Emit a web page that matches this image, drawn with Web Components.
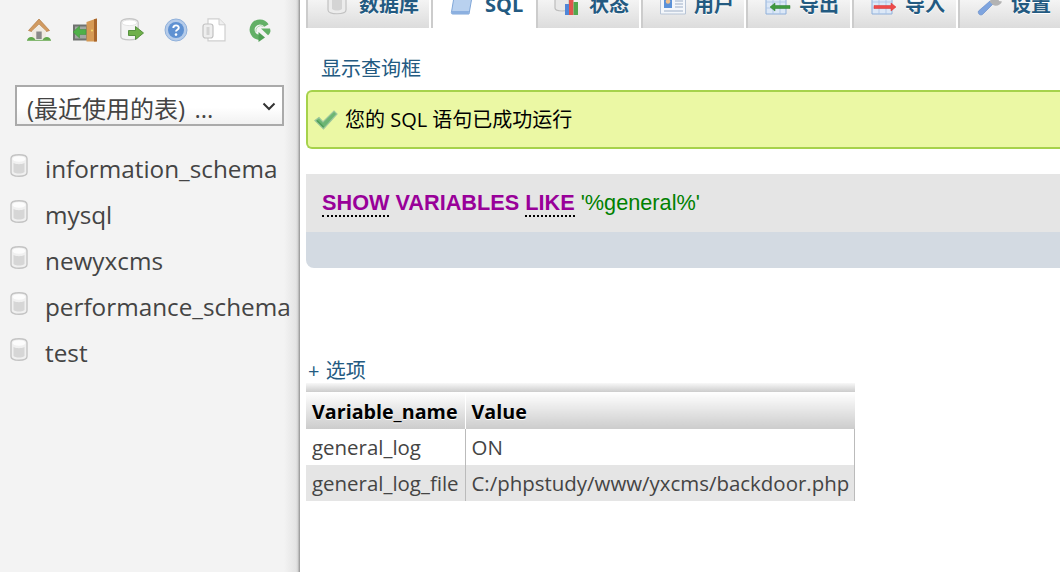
<!DOCTYPE html>
<html lang="zh"><head><meta charset="utf-8"><title>phpMyAdmin</title>
<style>
html,body{margin:0;padding:0;height:100%;background:#fff;overflow:hidden}
body{font-family:"Open Sans","Noto Sans CJK SC",sans-serif}
</style></head><body>
<pma-app>
  <pma-sidebar slot="side">
    <pma-toolbar>
      <pma-icon name="home"></pma-icon><pma-icon name="exit"></pma-icon><pma-icon name="dbgo"></pma-icon><pma-icon name="help"></pma-icon><pma-icon name="docs"></pma-icon><pma-icon name="reload"></pma-icon>
    </pma-toolbar>
    <pma-select>(最近使用的表) ...</pma-select>
    <pma-db>information_schema</pma-db>
    <pma-db>mysql</pma-db>
    <pma-db>newyxcms</pma-db>
    <pma-db>performance_schema</pma-db>
    <pma-db>test</pma-db>
  </pma-sidebar>
  <pma-main slot="main">
    <pma-tabs>
      <pma-tab icon="tdb" style="--w:123px;--pl:19px;--g:12px">数据库</pma-tab>
      <pma-tab icon="tsql" active style="--w:103px;--pl:17px;--g:11px">SQL</pma-tab>
      <pma-tab icon="tstat" style="--w:103px;--pl:16px;--g:11px">状态</pma-tab>
      <pma-tab icon="tuser" style="--w:103px;--pl:17px;--g:8px">用户</pma-tab>
      <pma-tab icon="texp" style="--w:104px;--pl:17px;--g:8px">导出</pma-tab>
      <pma-tab icon="timp" style="--w:104px;--pl:17px;--g:8px">导入</pma-tab>
      <pma-tab icon="tset" style="--w:102px;--pl:17px;--g:8px">设置</pma-tab>
    </pma-tabs>
    <pma-link style="--ml:15px;--mt:29px">显示查询框</pma-link>
    <pma-success>您的 SQL 语句已成功运行</pma-success>
    <pma-sql></pma-sql>
    <pma-link style="--ml:2px;--mt:91px">+ 选项</pma-link>
    <pma-result></pma-result>
  </pma-main>
</pma-app>
<script>
const ICONS={
home:`<svg viewBox="0 0 24 24" width="24" height="24"><path d="M1.500 12.500 12 1l10.500 11.500-3 1L12 6 4.500 13.500z" fill="#d19a60" stroke="#b07a42" stroke-width=".7"/><path d="M5 13 12 6.500 19 13v8H5z" fill="#f0ebe2"/><path d="M9.300 13.500h5.400V21H9.300z" fill="#8a8a8a"/><path d="M0 23c.3-3.500 4-5 7-3 .8.600 1.300 1.800 1.500 3zM24 23c-.3-3.500-4-5-7-3-.8.600-1.300 1.800-1.500 3z" fill="#5fa84a"/><path d="M0 21.800h24V23H0z" fill="#86b974"/></svg>`,
exit:`<svg viewBox="0 0 24 24" width="24" height="24"><path d="M0 6.500h15V22.500H0z" fill="#6f726f"/><path d="M2 8.500h11v12H2z" fill="#a3a6a3"/><path d="M13.500 4 23.500.5v23h-10z" fill="#d69a55"/><path d="M21 1.300V23.500h3V.5z" fill="#a9662c"/><circle cx="19" cy="12.500" r="1" fill="#f6dc6b"/><path d="M0 14l6.500-6v3.500H13v5H6.500V20z" fill="#4fb048" stroke="#3c8c38" stroke-width=".5"/></svg>`,
dbgo:`<svg viewBox="0 0 24 24" width="24" height="24"><path d="M.8 4.500c0-5 17.400-5 17.400 0v14c0 4.500-17.400 4.500-17.400 0z" fill="#f4f4f4" stroke="#c6c6c6" stroke-width="1.300"/><ellipse cx="9.500" cy="4.800" rx="7.500" ry="2.800" fill="#fff" stroke="#d6d6d6" stroke-width=".6"/><path d="M8.500 12.500h7V8.500l8 6.500-8 6.500v-4h-7z" fill="#6fb04a" stroke="#4d8a36" stroke-width=".9"/></svg>`,
help:`<svg viewBox="0 0 24 24" width="24" height="24"><circle cx="12" cy="12" r="11" fill="#b5cbe9" stroke="#8fb0da"/><circle cx="12" cy="12" r="8" fill="#5f91d2"/><path d="M9.300 10c0-3.500 5.500-3.500 5.500-.2 0 2-2.800 2-2.800 3.800" fill="none" stroke="#fff" stroke-width="1.900"/><circle cx="12" cy="16.600" r="1.300" fill="#fff"/></svg>`,
docs:`<svg viewBox="0 0 24 24" width="24" height="24"><path d="M6 .8h11l6 6v16H6z" fill="#fff" stroke="#cfcfcf" stroke-width="1.200"/><path d="M17 .8v6h6" fill="#efefef" stroke="#cfcfcf" stroke-width="1"/><rect x="1" y="6" width="10" height="14" rx="2.500" fill="#eee" stroke="#c2c2c2" stroke-width="1.200"/><rect x="4.500" y="9" width="3" height="8" fill="#d4d4d4"/></svg>`,
reload:`<svg viewBox="0 0 24 24" width="24" height="24"><path d="M18.500 7.500A7.800 7.800 0 1 0 11.500 19.500" fill="none" stroke="#62b066" stroke-width="5"/><path d="M10.500 14 17 19.500 10.500 24z" fill="#4f9f55"/><path d="M13 10.500h9l.5 2.500c-.3 1.800-1.200 3.200-2.500 4.300z" fill="#62b066"/><path d="M15.500 8.500A5 5 0 0 0 8 14" fill="none" stroke="#a8d6aa" stroke-width="1"/></svg>`,
dbitem:`<svg viewBox="0 0 18 23" width="18" height="23"><path d="M1 4.500C1-.5 17-.5 17 4.500v14c0 5-16 5-16 0z" fill="#f0f0f0" stroke="#c4c4c4" stroke-width="1.400"/><ellipse cx="9" cy="5" rx="6.500" ry="2.800" fill="#fcfcfc"/><path d="M3.500 9c3 1.600 8 1.600 11 0v9c-3 2-8 2-11 0z" fill="#d6d6d6"/></svg>`,
check:`<svg viewBox="0 0 24 22" width="24" height="22"><path d="M1 11.500 5 8.500l4 4.500L20 2l3 3L9.500 20z" fill="#6cb573" stroke="#9cc79c" stroke-width="1.200"/><path d="M3 11.500 9.500 18" stroke="#4f9d58" stroke-width="1.500"/></svg>`,
tdb:`<svg viewBox="0 0 20 16" width="20" height="16"><path d="M1-6h18V11c0 5-18 5-18 0z" fill="#ececec" stroke="#c2c2c2" stroke-width="1.200"/><path d="M5-6h10V10c-3 2-7 2-10 0z" fill="#d4d4d4"/></svg>`,
tsql:`<svg viewBox="0 0 24 16" width="24" height="16"><path d="M4-2h18l-3 17H2.500C1.500 15 1 14 1.500 13z" fill="#b9d1ef" stroke="#7fa6d8" stroke-width="1"/><path d="M2 12h17l-.5 3H2z" fill="#8cb0e0"/></svg>`,
tstat:`<svg viewBox="0 0 24 16" width="24" height="16"><path d="M1-6h14V9c0 4-14 4-14 0z" fill="#e8e8e8" stroke="#bdbdbd" stroke-width="1.200"/><path d="M11 5h4v11h-4z" fill="#4f86d8"/><path d="M15 0h4.500v16H15z" fill="#e0564f"/><path d="M19.500 3H24v13h-4.500z" fill="#52a84e"/></svg>`,
tuser:`<svg viewBox="0 0 26 16" width="26" height="16"><path d="M.5-4h25v19H.5z" fill="#f4f7fb" stroke="#b7c4d6"/><rect x="4" y="0" width="8" height="9" fill="#5c92d8"/><circle cx="8" cy="2.500" r="2.200" fill="#f0c08c"/><path d="M15 2h8M15 5h8M15 8h8M4 12h19" stroke="#9db0c8" stroke-width="1.200"/></svg>`,
texp:`<svg viewBox="0 0 26 16" width="26" height="16"><path d="M1-4h20v19H1z" fill="#dce8f7" stroke="#8fb0da"/><path d="M1 3h20M1 9h20M8-4v19M15-4v19" stroke="#a9c3e6" stroke-width=".8"/><path d="M5 8l5-4v2.500h15v3H10V12z" fill="#3f9a40" stroke="#2f7c31" stroke-width=".5"/></svg>`,
timp:`<svg viewBox="0 0 26 16" width="26" height="16"><path d="M1-4h20v19H1z" fill="#dce8f7" stroke="#8fb0da"/><path d="M1 3h20M1 9h20M8-4v19M15-4v19" stroke="#a9c3e6" stroke-width=".8"/><path d="M25 8l-5-4v2.500H3v3h17V12z" fill="#ee4a4a" stroke="#d93333" stroke-width=".5"/></svg>`,
tset:`<svg viewBox="0 0 26 16" width="26" height="16"><path d="M1.500 12 13 2l3 3L5.500 15.500C3 17 .5 14.500 1.500 12z" fill="#7ea4df" stroke="#5f86c4" stroke-width=".6"/><path d="M13 3C13-1 19-6 25-5l-4 4 1 3 3 .5C24 6 19 8 16 6z" fill="#b3b3b3"/></svg>`
};
customElements.define("pma-icon",class extends HTMLElement{
  static get observedAttributes(){return["name"];}
  constructor(){super();this.attachShadow({mode:"open"});}
  attributeChangedCallback(){this.shadowRoot.innerHTML=`<style>:host{display:block;line-height:0;flex:none}svg{display:block;overflow:visible;filter:blur(.4px)}</style>${ICONS[this.getAttribute("name")]||""}`;}
});
function def(name,css,html,init){
  customElements.define(name,class extends HTMLElement{
    constructor(){super();const r=this.attachShadow({mode:"open"});r.innerHTML=`<style>${css}</style>${html}`;}
    connectedCallback(){if(init)init(this);}
  });
}
def("pma-app",":host{display:grid;grid-template-columns:300px 1fr;height:572px;overflow:hidden}",`<slot name="side"></slot><slot name="main"></slot>`);
def("pma-sidebar",`:host{display:block;height:572px;box-sizing:border-box;padding-top:18px;background:linear-gradient(to right,#f3f3f3 0,#f3f3f3 284px,#e4e4e4 296px,#d2d2d2 298px,#a8a8a8 299px,#999 300px)}`,`<slot></slot>`);
def("pma-toolbar",`:host{display:grid;grid-template-columns:46px 47px 44px 38px 46px 24px;margin-left:27px;height:24px}`,`<slot></slot>`);
def("pma-select",`:host{display:block;position:relative;box-sizing:border-box;width:269px;height:41px;margin:43px 0 20px 15px;border:2px solid #aaa;background:linear-gradient(#fff 55%,#f1f1f1);color:#444;font:24px/43px "Open Sans","Noto Sans CJK SC",sans-serif;word-spacing:3px;padding-left:10px;white-space:nowrap;overflow:hidden}
svg{position:absolute;right:6px;top:15px}`,`<slot></slot><svg width="14" height="9" viewBox="0 0 14 9"><path d="M1.500 1.500 7 7l5.500-5.500" fill="none" stroke="#333" stroke-width="2"/></svg>`);
def("pma-db",`:host{display:flex;height:46px;box-sizing:border-box;padding-left:10px;color:#444;font:24.300px/46px "Open Sans",sans-serif;white-space:nowrap}
pma-icon{margin:8px 17px 0 0}`,`<pma-icon name="dbitem"></pma-icon><slot></slot>`);
def("pma-main",`:host{display:block;min-width:0;height:572px;overflow:hidden;padding-left:6px}`,`<slot></slot>`);
def("pma-tabs",`:host{display:flex;gap:2px;height:28px;width:760px}`,`<slot></slot>`);
def("pma-tab",`:host{display:flex;align-items:flex-end;box-sizing:border-box;flex:none;width:var(--w);height:28px;padding:0 0 13px var(--pl);gap:var(--g);border-left:2px solid #ccc;background:linear-gradient(#f4f4f4,#dcdcdc);color:#235a81;font:bold 20px/20px "Open Sans","Noto Sans CJK SC",sans-serif;text-shadow:0 1px 0 #fff;white-space:nowrap}
:host([active]){background:#fff}`,`<pma-icon></pma-icon><slot></slot>`,el=>{el.shadowRoot.querySelector("pma-icon").setAttribute("name",el.getAttribute("icon"));});
def("pma-link",`:host{display:block;margin:var(--mt) 0 0 var(--ml);color:#235a81;font:20px/24px "Open Sans","Noto Sans CJK SC",sans-serif;word-spacing:1px}`,`<slot></slot>`);
def("pma-success",`:host{display:flex;align-items:center;gap:7px;box-sizing:border-box;height:59px;margin:9px 0 0;width:770px;padding-left:6px;background:#ebf8a4;border:2px solid #a6d24b;border-right-width:0;border-radius:6px 0 0 6px;color:#000;font:20px/24px "Open Sans","Noto Sans CJK SC",sans-serif}`,`<pma-icon name="check"></pma-icon><slot></slot>`);
def("pma-sql",`:host{display:block;margin-top:25px;width:770px;border-radius:0 0 0 8px;overflow:hidden;background:#d3dae2}
.code{height:58px;box-sizing:border-box;background:#e5e5e5;padding-left:16px;font:21.700px/57px "Liberation Sans",Arial,sans-serif;white-space:pre}
.k{color:#909;font-weight:bold}.d{border-bottom:2px dotted #000}.s{color:#008000}
.bar{height:36px}`,`<div class="code"><span class="k d">SHOW</span><span class="k"> VARIABLES </span><span class="k d">LIKE</span> <span class="s">'%general%'</span></div><div class="bar"></div>`);
def("pma-result",`:host{display:block;width:549px;color:#444;font:20.450px/36px "Open Sans",sans-serif}
.top{height:9px;background:linear-gradient(#f8f8f8,#ccc)}
table{border-collapse:collapse;width:549px;table-layout:fixed}
th,td{padding:0 0 0 6px;text-align:left;white-space:nowrap;height:36px;box-sizing:border-box}
th{height:37px;padding-top:2px;line-height:33px;font-size:19.700px;color:#000;background:linear-gradient(#fff,#ccc);font-weight:bold;text-shadow:0 1px 0 #fff}
th+th{border-left:1px solid #fff}
td+td{border-left:1px solid #bbb}
td:last-child{border-right:1px solid #bbb}
tr.alt td{background:#e5e5e5}`,`<div class="top"></div><table><colgroup><col style="width:159px"><col></colgroup><thead><tr><th>Variable_name</th><th>Value</th></tr></thead><tbody><tr><td>general_log</td><td>ON</td></tr><tr class="alt"><td>general_log_file</td><td>C:/phpstudy/www/yxcms/backdoor.php</td></tr></tbody></table>`);
</script>
</body></html>
